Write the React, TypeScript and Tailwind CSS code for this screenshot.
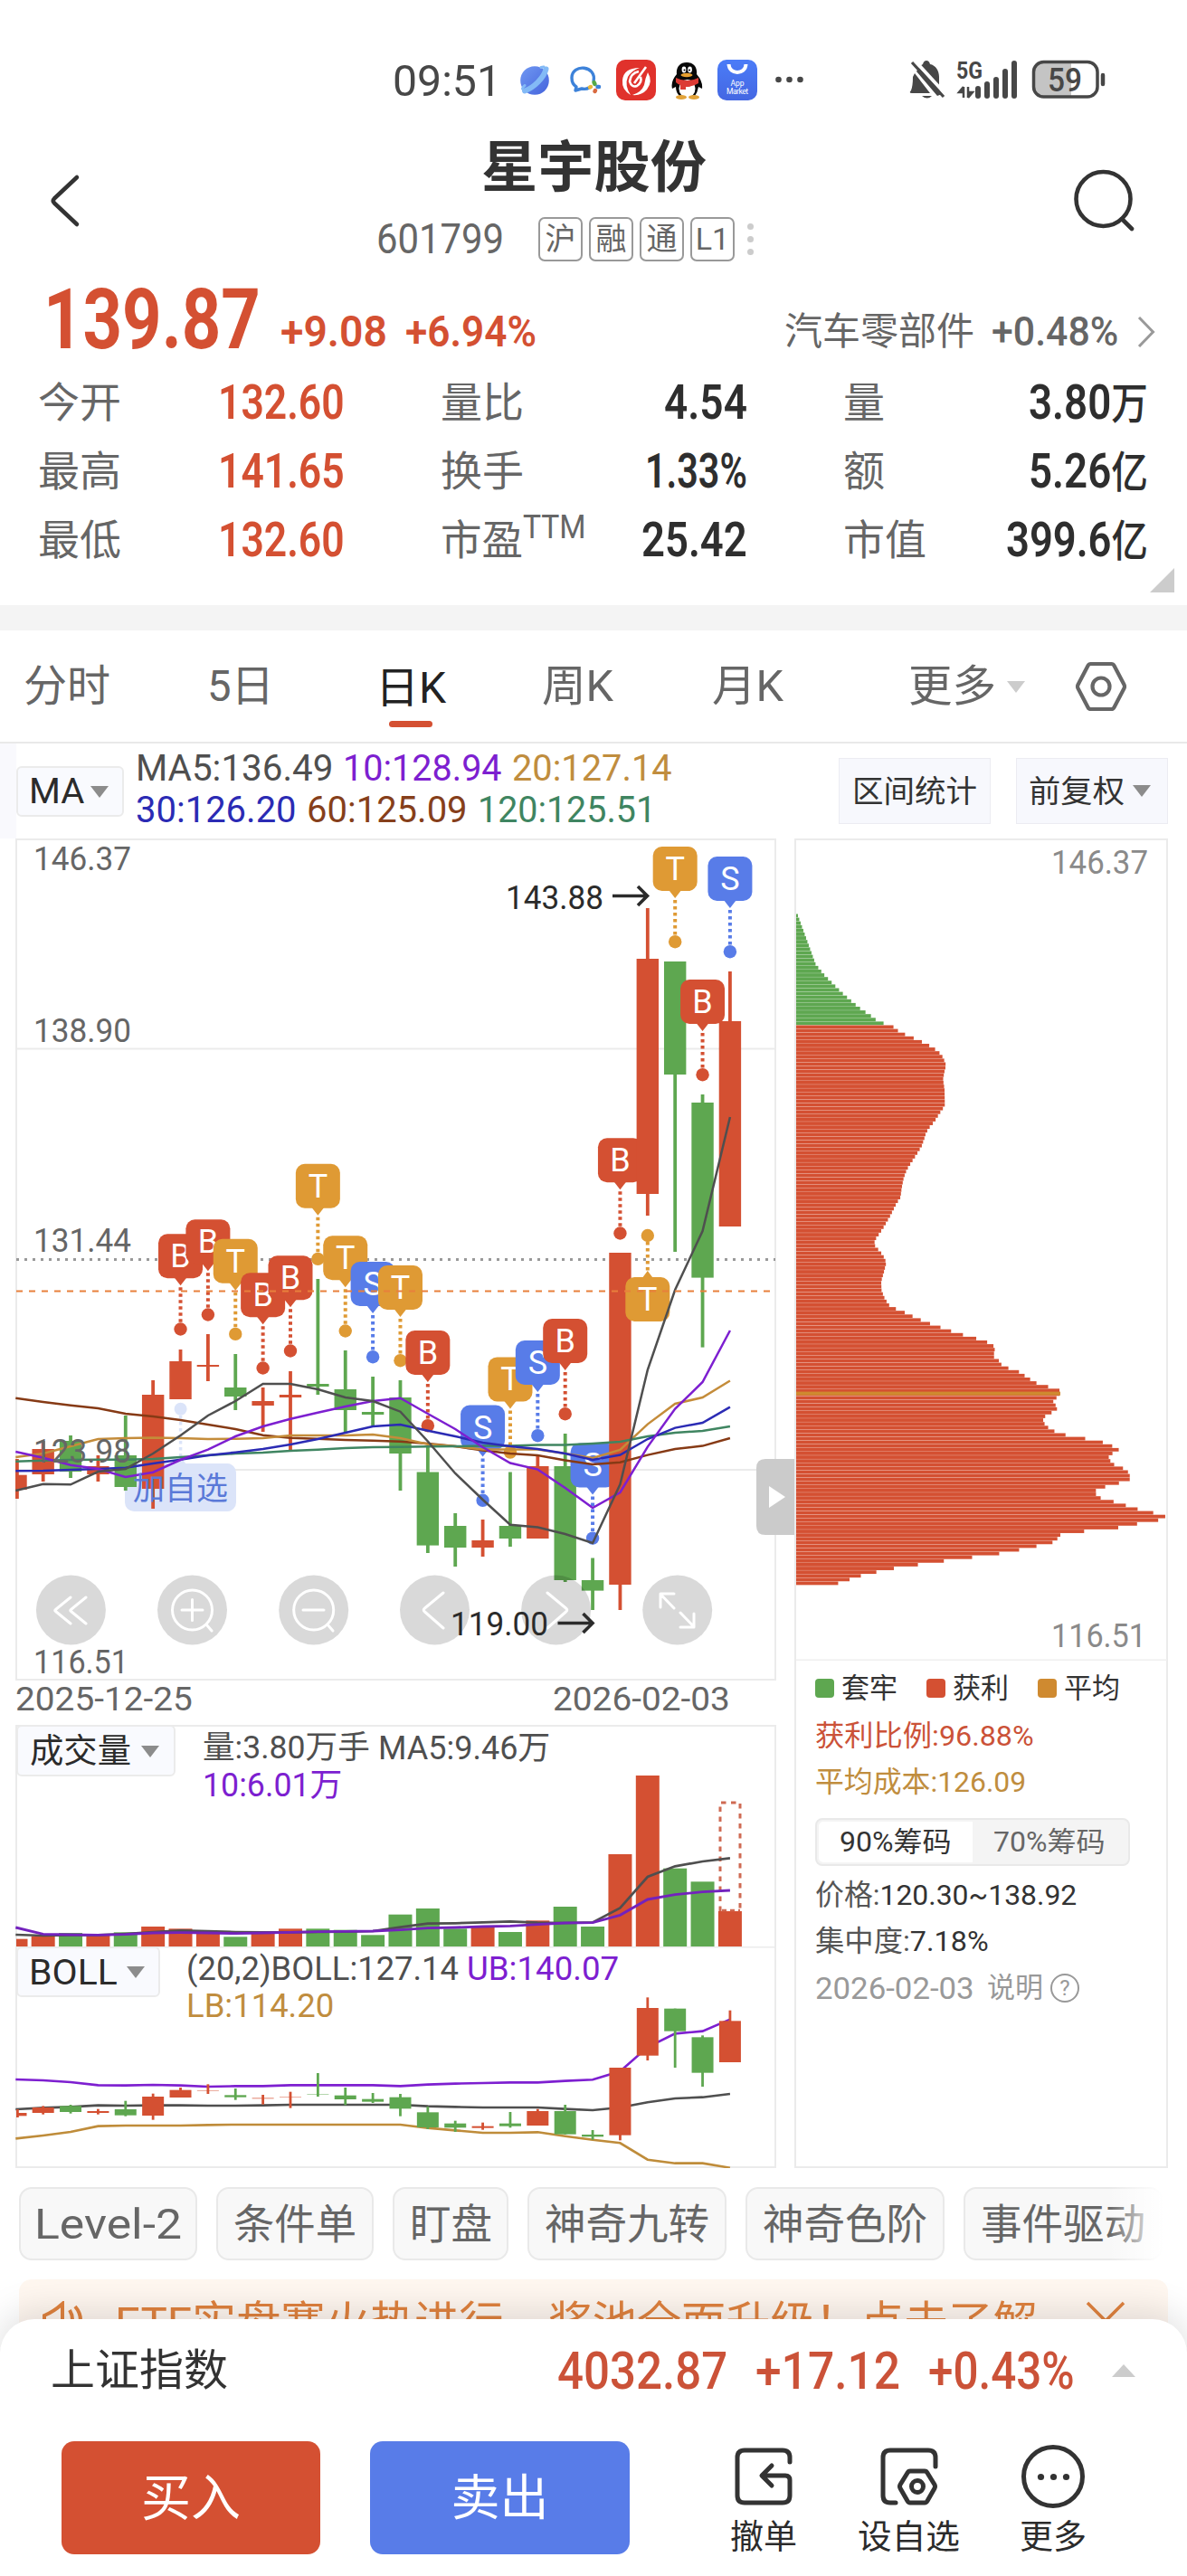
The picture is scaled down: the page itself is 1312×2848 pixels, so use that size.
import { useLayoutEffect, useRef, useState, type ReactNode } from "react";

const RED = "#d45032";
const GREEN = "#5ea750";
const ORANGE = "#df9a34";
const BLUE = "#587ce8";

/* Text squeezed or stretched horizontally to an exact width. */
function Fit({ w, className = "", children }: { w: number; className?: string; children: ReactNode }) {
  const ref = useRef<HTMLSpanElement>(null);
  const [scale, setScale] = useState(1);
  useLayoutEffect(() => {
    if (ref.current) setScale(w / ref.current.offsetWidth);
  }, [w]);
  return (
    <span className="inline-flex shrink-0" style={{ width: w }}>
      <span
        ref={ref}
        className={`inline-block shrink-0 origin-left whitespace-nowrap leading-none ${className}`}
        style={{ transform: `scaleX(${scale})` }}
      >
        {children}
      </span>
    </span>
  );
}

/* ---------- chart data ---------- */

const X0 = 17.3;
const STEP = 30.37;
const px = (i: number) => X0 + STEP * i;

// [up, bodyTop, bodyBottom, wickTop, wickBottom]
type Candle = [boolean, number, number, number, number];
const candles: Candle[] = [
  [true, 1630.7, 1647, 1613, 1657],
  [true, 1602, 1630, 1593, 1638],
  [false, 1593, 1627, 1587, 1634],
  [true, 1621, 1630, 1609, 1638],
  [false, 1609, 1644, 1565, 1648],
  [true, 1542, 1646, 1526, 1668],
  [true, 1505, 1547, 1492, 1547],
  [true, 1509, 1511, 1475, 1527],
  [false, 1534, 1544, 1497, 1559],
  [true, 1549, 1554, 1534, 1583],
  [true, 1542, 1545, 1516, 1604],
  [false, 1530, 1533, 1414, 1542],
  [false, 1536, 1559, 1493, 1585],
  [false, 1561, 1564, 1522, 1576],
  [false, 1545, 1607, 1526, 1648],
  [false, 1627.5, 1708.6, 1598, 1717],
  [false, 1687, 1711, 1673, 1732],
  [true, 1703, 1711, 1680, 1721],
  [false, 1687, 1701, 1627.5, 1710],
  [true, 1621, 1701, 1609, 1701],
  [false, 1621, 1747, 1585, 1749],
  [false, 1747, 1758.6, 1722.5, 1780],
  [true, 1385, 1752, 1385, 1780],
  [true, 1060, 1320, 1004, 1344],
  [false, 1063, 1188, 1063, 1384],
  [false, 1219, 1412.6, 1210, 1489.6],
  [true, 1129, 1356, 1074, 1356],
];

const markers: Record<number, { t: "B" | "S" | "T"; y: number; up?: boolean }> = {
  6: { t: "B", y: 1364.3 },
  7: { t: "B", y: 1348.3 },
  8: { t: "T", y: 1369.7 },
  9: { t: "B", y: 1407.3 },
  10: { t: "B", y: 1388.3 },
  11: { t: "T", y: 1286.7 },
  12: { t: "T", y: 1366.3 },
  13: { t: "S", y: 1395 },
  14: { t: "T", y: 1399 },
  15: { t: "B", y: 1471 },
  17: { t: "S", y: 1553.6 },
  18: { t: "T", y: 1500.4 },
  19: { t: "S", y: 1482 },
  20: { t: "B", y: 1458 },
  21: { t: "S", y: 1595.4 },
  22: { t: "B", y: 1258.3 },
  23: { t: "T", y: 1412, up: true },
  24: { t: "T", y: 936 },
  25: { t: "B", y: 1083 },
  26: { t: "S", y: 947 },
};

const maLines: { c: string; v: number[] }[] = [
  { c: "#863a15", v: [1545.7, 1550, 1553.7, 1557, 1563, 1566, 1570, 1575, 1580, 1586.7, 1589.7, 1590.7, 1592, 1592.7, 1593.7, 1596, 1599, 1603.6, 1607, 1609, 1614.6, 1619, 1616.8, 1608.6, 1602, 1598.6, 1590] },
  { c: "#c48c3a", v: [1611, 1607, 1599, 1591, 1590, 1589.5, 1590, 1591, 1590.7, 1590, 1587, 1587, 1587, 1586, 1590, 1596.7, 1599, 1602.5, 1602.5, 1602.5, 1607, 1612, 1603, 1574.6, 1552, 1545, 1526.5] },
  { c: "#3f8561", v: [1615.7, 1614.7, 1614, 1613.7, 1613.7, 1613, 1611, 1609, 1607, 1606, 1604, 1602.7, 1601, 1600, 1599.7, 1599.3, 1599, 1598.6, 1598.6, 1597.5, 1597.5, 1596, 1594, 1588, 1584, 1582, 1577] },
  { c: "#2b2bb4", v: [1626.3, 1626, 1625, 1624, 1622.7, 1618, 1613.7, 1609, 1605.7, 1602, 1597, 1591, 1584, 1577, 1575, 1581.7, 1588, 1595, 1599, 1602, 1607, 1614, 1608.6, 1591, 1578.6, 1573, 1555.7] },
  { c: "#7d1fd0", v: [1605, 1611.7, 1619.7, 1624, 1633, 1627.7, 1614, 1602.7, 1588, 1577, 1568.7, 1561.7, 1555, 1549, 1545.7, 1563, 1580, 1600, 1617.5, 1624.6, 1645, 1667, 1650, 1599.6, 1557.5, 1528, 1471] },
  { c: "#4f4f4f", v: [1648, 1640.7, 1641.3, 1627, 1624, 1607, 1587, 1565, 1549, 1530, 1530, 1536, 1545, 1549, 1560.7, 1593.5, 1629, 1658, 1685.7, 1688.6, 1696, 1706, 1641, 1514.6, 1426, 1361, 1235] },
];

const volume: [boolean, number][] = [
  [true, 731], [true, 723], [false, 711], [true, 720], [false, 709], [true, 690], [true, 697], [true, 712], [false, 724],
  [true, 709], [true, 697], [false, 697], [false, 701], [false, 718], [false, 650], [false, 630], [false, 697], [true, 690],
  [false, 708], [true, 670], [false, 624], [false, 690], [true, 450], [true, 189], [false, 497], [false, 541], [true, 639],
];
const volMa5 = [717, 720, 718, 718, 714, 708, 703, 705, 708, 709, 709, 708, 707, 705, 692, 680, 679, 676, 673, 677, 678, 676, 628, 525, 490, 474, 463];
const volMa10 = [693, 715, 717, 718, 716, 711, 710, 711, 713, 711, 709, 707, 706, 705, 701, 695, 693, 690, 688, 683, 678, 677, 652, 600, 584, 575, 570];

const bollCandles: Candle[] = [
  [true, 1308, 1318, 1296, 1323], [true, 1290, 1308, 1285, 1313], [false, 1285, 1305, 1281, 1310], [true, 1302, 1308, 1295, 1313],
  [false, 1296, 1316, 1268, 1319], [true, 1254, 1317, 1244, 1331], [true, 1232, 1257, 1224, 1257], [true, 1233, 1235, 1213, 1245],
  [false, 1249, 1256, 1227, 1265], [true, 1258, 1261, 1248, 1280], [true, 1254, 1256, 1238, 1292], [false, 1246, 1248, 1176, 1254],
  [false, 1250, 1263, 1224, 1282], [false, 1262, 1271, 1242, 1275], [false, 1256, 1294, 1245, 1319], [false, 1306, 1356, 1287, 1362],
  [false, 1343, 1357, 1334, 1371], [true, 1352, 1358, 1340, 1364], [false, 1343, 1352, 1305, 1357], [true, 1302, 1350, 1295, 1350],
  [false, 1302, 1379, 1281, 1379], [false, 1380, 1387, 1365, 1397], [true, 1158, 1382, 1158, 1399], [true, 960, 1118, 925, 1134],
  [false, 962, 1037, 962, 1158], [false, 1057, 1175, 1051, 1221], [true, 1003, 1140, 968, 1140],
];
const bollUp = [1197, 1200, 1206, 1216, 1217, 1215, 1217, 1221, 1219, 1219, 1216, 1216, 1216, 1216, 1219, 1214, 1211, 1209, 1207, 1207, 1202, 1198, 1170, 1090, 1045, 1037, 998];
const bollMid = [1296, 1291, 1288, 1283, 1284, 1283, 1283, 1284, 1284, 1283, 1281, 1281, 1281, 1281, 1281, 1286, 1288, 1290, 1290, 1290, 1295, 1299, 1290, 1273, 1260, 1256, 1245];
const bollLow = [1393, 1383, 1371, 1352, 1350, 1350, 1350, 1348, 1347, 1347, 1347, 1347, 1347, 1347, 1347, 1358, 1366, 1374, 1374, 1372, 1385, 1397, 1408, 1463, 1475, 1475, 1490];

// Chip distribution outline: [row, width]
const chips: [number, number][] = [
  [193, 64], [290, 125], [310, 153], [330, 187], [345, 213], [360, 242], [375, 273], [390, 311], [400, 332], [408, 378], [420, 403], [427, 431],
  [434, 459], [441, 485], [448, 508], [456, 528], [463, 540], [470, 548], [484, 557], [498, 551], [512, 547], [530, 552], [560, 553], [568, 546],
  [577, 535], [592, 519], [605, 500], [615, 490], [625, 485], [640, 476], [655, 460], [670, 443], [685, 427], [700, 417], [720, 410], [738, 406],
  [752, 391], [775, 371], [795, 351], [810, 334], [820, 322], [829, 318], [836, 328], [850, 348], [864, 359], [880, 352], [900, 342], [917, 343],
  [930, 351], [945, 366], [951, 382], [958, 412], [966, 441], [973, 467], [980, 496], [987, 530], [994, 564], [1001, 600], [1008, 645], [1015, 684],
  [1022, 712], [1030, 719], [1045, 714], [1052, 731], [1060, 740], [1067, 762], [1073, 795], [1081, 816], [1088, 834], [1095, 852], [1102, 890],
  [1110, 933], [1116, 936], [1124, 924], [1131, 912], [1145, 927], [1152, 910], [1160, 886], [1167, 879], [1174, 883], [1181, 894], [1188, 913],
  [1195, 945], [1202, 1010], [1210, 1076], [1217, 1107], [1224, 1131], [1231, 1110], [1238, 1096], [1246, 1102], [1252, 1110], [1259, 1141],
  [1267, 1160], [1274, 1166], [1281, 1169], [1288, 1135], [1296, 1084], [1303, 1054], [1310, 1054], [1317, 1068], [1324, 1110], [1331, 1150],
  [1338, 1187], [1346, 1245], [1352, 1287], [1360, 1262], [1367, 1193], [1375, 1123], [1382, 1008], [1389, 933], [1396, 926], [1403, 910],
  [1410, 858], [1417, 802], [1425, 728], [1432, 638], [1439, 546], [1446, 462], [1453, 384], [1460, 327], [1467, 276], [1475, 234], [1482, 197], [1489, 197],
];
function chipWidth(r: number) {
  for (let k = 1; k < chips.length; k++) {
    if (r <= chips[k][0]) {
      const [r0, w0] = chips[k - 1];
      const [r1, w1] = chips[k];
      return (w0 + ((w1 - w0) * (r - r0)) / (r1 - r0) - 60) / 3;
    }
  }
  return 0;
}

const line = (v: number[], f: (y: number) => number = (y) => y) => v.map((y, i) => `${px(i)},${f(y)}`).join(" ");
const sub = (y: number) => 1900 + y / 3;

/* ---------- chart pieces ---------- */

function Marker({ x, t, y, up }: { x: number; t: string; y: number; up?: boolean }) {
  const c = t === "B" ? RED : t === "S" ? BLUE : ORANGE;
  return (
    <g>
      {up ? (
        <>
          <circle cx={x} cy={1366} r={7.2} fill={c} />
          <path d={`M${x} 1373V1405`} stroke={c} strokeWidth={4} strokeDasharray="3.5 3.5" />
          <path d={`M${x - 6} ${y + 1}L${x} ${y - 7}L${x + 6} ${y + 1}Z`} fill={c} />
        </>
      ) : (
        <>
          <circle cx={x} cy={y + 105.2} r={7.2} fill={c} />
          <path d={`M${x} ${y + 59}V${y + 99}`} stroke={c} strokeWidth={4} strokeDasharray="3.5 3.5" />
          <path d={`M${x - 7} ${y + 48}L${x} ${y + 57}L${x + 7} ${y + 48}Z`} fill={c} />
        </>
      )}
      <rect x={x - 24.5} y={y} width={49} height={49} rx={10} fill={c} />
      <text x={x} y={y + 37} textAnchor="middle" fill="#fff" fontSize={36}>
        {t}
      </text>
    </g>
  );
}

function AxisText({ x, y, w, children, fill = "#666" }: { x: number; y: number; w: number; children: string; fill?: string }) {
  return (
    <text x={x} y={y} fontSize={36} textLength={w} lengthAdjust="spacingAndGlyphs" fill={fill}>
      {children}
    </text>
  );
}

function Arrow({ x, y }: { x: number; y: number }) {
  return <path d={`M${x} ${y}H${x + 38}M${x + 28} ${y - 10.5}L${x + 38.5} ${y}L${x + 28} ${y + 10.5}`} fill="none" stroke="#2b2b2b" strokeWidth={3.6} />;
}

function MainChart() {
  return (
    <svg viewBox="17 927 841 931" className="block h-[931px] w-[841px]">
      <g stroke="#ebebeb" strokeWidth={2} fill="none">
        <rect x={18} y={928} width={839} height={929} />
        <path d="M18 1159.5H857M18 1625H857" />
      </g>
      <path d="M18 1392.5H857" stroke="#999" strokeWidth={3} strokeDasharray="3 6" />
      <circle cx={199.6} cy={1557.7} r={7} fill="#dbe4f9" />
      <path d="M199.6 1565V1612" stroke="#dbe4f9" strokeWidth={3.5} strokeDasharray="3.5 3.5" />
      <path d="M193 1619L199.6 1611L206 1619Z" fill="#dbe4f9" />
      <rect x={138} y={1618} width={123} height={53} rx={10} fill="#dbe4f9" />
      {candles.map(([up, bt, bb, wt, wb], i) => {
        const c = up ? RED : GREEN;
        const m = markers[i];
        const x = px(i);
        return (
          <g key={i}>
            <rect x={Math.max(x - 1.9, 17)} y={wt} width={3.8} height={wb - wt} fill={c} />
            <rect x={Math.max(x - 12.2, 18)} y={bt} width={i ? 24.4 : 11.7} height={bb - bt} fill={c} />
            {m && <Marker x={x} t={m.t} y={m.y} up={m.up} />}
          </g>
        );
      })}
      {maLines.map((l) => (
        <polyline key={l.c} points={line(l.v)} fill="none" stroke={l.c} strokeWidth={2.5} />
      ))}
      <path d="M18 1427.4H851" stroke="#e8803c" strokeWidth={2} strokeDasharray="7 7" />
      <g fill="#000" fillOpacity={0.15}>
        {[78.4, 212.5, 346.7, 480.5, 614.6, 748.7].map((x) => (
          <circle key={x} cx={x} cy={1780} r={38.5} />
        ))}
      </g>
      <g fill="none" stroke="#fff" strokeWidth={3} strokeLinecap="round" strokeLinejoin="round">
        <path d="M78 1766L61.5 1779.5Q60 1780.5 61.5 1781.5L78 1795M95 1766L78.5 1779.5Q77 1780.5 78.5 1781.5L95 1795" />
        <circle cx={212.5} cy={1780} r={22} />
        <path d="M201 1780H224M212.500 1768.500V1791.500M228 1796L234 1803" />
        <circle cx={346.7} cy={1780} r={22} />
        <path d="M335 1780H358M362 1796L368 1803" />
        <path d="M490 1761L469.500 1778Q467 1780 469.500 1782L490 1800" />
        <path d="M605 1761L625.500 1778Q628 1780 625.500 1782L605 1800" />
        <path d="M745 1778L730.500 1763M730 1777V1762H745M752 1783L766.500 1798M767 1784V1799H752" />
      </g>
      <AxisText x={37} y={962} w={108}>146.37</AxisText>
      <AxisText x={37} y={1152} w={108}>138.90</AxisText>
      <AxisText x={37} y={1384} w={108}>131.44</AxisText>
      <AxisText x={37} y={1616.5} w={108}>123.98</AxisText>
      <AxisText x={37} y={1850} w={105}>116.51</AxisText>
      <AxisText x={559} y={1004.5} w={108} fill="#2b2b2b">143.88</AxisText>
      <Arrow x={677} y={990.5} />
      <AxisText x={498} y={1807.5} w={108} fill="#2b2b2b">119.00</AxisText>
      <Arrow x={616.5} y={1794.5} />
      <text x={147} y={1658} fontSize={35} textLength={105} fill="#5a79d8">
        加自选
      </text>
      <path d="M858 1613H846Q836 1613 836 1623V1687Q836 1697 846 1697H858Z" fill="#cbcbcb" />
    </svg>
  );
}

function VolumeChart() {
  return (
    <svg viewBox="17 1907 841 245" className="absolute inset-0 h-[245px] w-[841px]">
      <path d="M18 2152V1908H857V2152" fill="none" stroke="#ebebeb" strokeWidth={2} />
      {volume.map(([up, y], i) => (
        <rect key={i} x={i ? px(i) - 13 : 18} y={sub(y)} width={i ? 26 : 12.5} height={2152 - sub(y)} fill={up ? RED : GREEN} />
      ))}
      <path d="M796 2113V1993H818V2113" fill="none" stroke="#cf6a53" strokeWidth={3} strokeDasharray="5.5 5.500" />
      <path d="M798 2112H818" stroke="#cf6a53" strokeWidth={2.4} strokeDasharray="5 4" />
      <polyline points={line(volMa5, sub)} fill="none" stroke="#4f4f4f" strokeWidth={2.7} />
      <polyline points={line(volMa10, sub)} fill="none" stroke="#7322bd" strokeWidth={2.9} />
    </svg>
  );
}

function BollChart() {
  return (
    <svg viewBox="17 2152 841 245" className="absolute inset-0 h-[245px] w-[841px]">
      <rect x={18} y={2152.5} width={839} height={243.5} fill="none" stroke="#ebebeb" strokeWidth={2} />
      <polyline points={line(bollUp, sub)} fill="none" stroke="#7d1fd0" strokeWidth={2.6} />
      <polyline points={line(bollMid, sub)} fill="none" stroke="#4f4f4f" strokeWidth={2.6} />
      <polyline points={line(bollLow, sub)} fill="none" stroke="#bf8c3a" strokeWidth={2.6} />
      {bollCandles.map(([up, bt, bb, wt, wb], i) => (
        <g key={i} fill={up ? RED : GREEN}>
          <rect x={Math.max(px(i) - 1.4, 18)} y={sub(wt)} width={2.8} height={(wb - wt) / 3} />
          <rect x={i ? px(i) - 12 : 18} y={sub(bt)} width={i ? 24 : 11.5} height={(bb - bt) / 3} fillOpacity={bb - bt < 4 ? 0.7 : 1} />
        </g>
      ))}
    </svg>
  );
}

function ChipChart() {
  const pitch = 4.1;
  const rows = Array.from({ length: 181 }, (_, k) => k);
  return (
    <svg viewBox="878 927 413 909" className="block h-[909px] w-[413px]">
      {rows.map((k) => {
        const y = 1010.5 + k * pitch;
        const r = (y + 2 - 900) * 1.742;
        return <rect key={k} x={880} y={y} width={Math.max(chipWidth(r), 0)} height={pitch - 0.25} fill={y < 1130 ? GREEN : RED} />;
      })}
      <rect x={880} y={1538.6} width={292} height={4} fill="#cf8a30" />
      <path d="M879 927V1836M1290 927V1836" stroke="#ebebeb" strokeWidth={2} />
      <path d="M878 928H1291" stroke="#ebebeb" strokeWidth={2} />
      <AxisText x={1162} y={966} w={107} fill="#8a8a8a">146.37</AxisText>
      <AxisText x={1162} y={1821} w={105} fill="#8a8a8a">116.51</AxisText>
      <path d="M880 1835.5H1290" stroke="#efefef" strokeWidth={2} />
    </svg>
  );
}

/* ---------- small pieces ---------- */

function Tri({ className = "h-[13px] w-5" }: { className?: string }) {
  return (
    <svg viewBox="0 0 20 13" preserveAspectRatio="none" className={`shrink-0 fill-current ${className}`}>
      <path d="M0 0H20L10 13Z" />
    </svg>
  );
}

function StatusBar() {
  return (
    <div className="flex h-[130px] items-center pt-12 pl-[434px] text-[#474747]">
      <Fit w={120} className="text-[49px]">09:51</Fit>
      <svg viewBox="554 60 340 60" className="h-[60px] w-[340px]">
        <defs>
          <linearGradient id="planet" x1="0" y1="0" x2="1" y2="1">
            <stop offset="0" stopColor="#7099f2" />
            <stop offset="1" stopColor="#4463dc" />
          </linearGradient>
          <linearGradient id="market" x1="0" y1="0" x2="0" y2="1">
            <stop offset="0" stopColor="#4b7cf8" />
            <stop offset="1" stopColor="#4467e2" />
          </linearGradient>
        </defs>
        <circle cx={591} cy={90} r={15.8} fill="url(#planet)" />
        <path d="M580 101.500C590 98 601 87 603.500 77.500" fill="none" stroke="#83baf6" strokeWidth={6} strokeLinecap="round" />
        <path d="M577.500 99Q578 97 580 95.500M598 75.500L601 75" fill="none" stroke="#83baf6" strokeWidth={3} strokeLinecap="round" />
        <path d="M656 91C660 73 632 71 632 87Q632 94 637 97L636 101L643 99Q648 100 651 98" fill="none" stroke="#3d82d9" strokeWidth={3.4} strokeLinejoin="round" />
        <path d="M656.500 92L657.500 94" stroke="#55a947" strokeWidth={4.500} strokeLinecap="round" />
        <path d="M660.500 97H662" stroke="#3d82d9" strokeWidth={4.500} strokeLinecap="round" />
        <path d="M658 101L657.500 102" stroke="#d96a40" strokeWidth={4.500} strokeLinecap="round" />
        <path d="M652 97.500L653 97" stroke="#e9b63c" strokeWidth={4.500} strokeLinecap="round" />
        <rect x={681} y={67} width={44} height={45} rx={10} fill="#e0322c" />
        <path d="M707 76Q689 76 688 90Q687 100 697 106Q690 95 694 86Q698 79 707 76ZM716 81Q722 91 715 100Q709 107 699 106Q709 103 712 95Q713 88 716 81Z" fill="#fff" />
        <path d="M714 75L701 93M706 80Q697 82 696 91Q698 98 704 96Q710 92 708 86" fill="none" stroke="#fff" strokeWidth={2.6} />
        <path d="M759 70C751 70 747 76 748 83Q741 91 743 99L747 97Q747 103 751 107H768Q771 103 772 97L776 99Q777 91 770 83C771 76 767 70 759 70Z" fill="#080808" />
        <ellipse cx={759.500} cy={99} rx={9} ry={10} fill="#fff" />
        <ellipse cx={753} cy={108.500} rx={6} ry={2.4} fill="#e2a33a" />
        <ellipse cx={767} cy={108.500} rx={6} ry={2.4} fill="#e2a33a" />
        <path d="M747 87Q759 93 772 87L772 93Q766 97 758 97V100H752V95Q749 94 747 92Z" fill="#dc3a34" />
        <ellipse cx={759} cy={84} rx={6.500} ry={2.200} fill="#e8a030" />
        <ellipse cx={756} cy={78} rx={2.400} ry={3.400} fill="#fff" />
        <ellipse cx={762.500} cy={78} rx={2.400} ry={3.400} fill="#fff" />
        <circle cx={756.500} cy={78.500} r={1} />
        <circle cx={762} cy={78.500} r={1} />
        <rect x={793} y={67} width={44} height={45} rx={10} fill="url(#market)" />
        <path d="M805.500 72C806 84 824 84 824.500 72" fill="none" stroke="#fff" strokeWidth={4} />
        <text x={815} y={96} fontSize={8.500} fill="#fff" textAnchor="middle">App</text>
        <text x={815} y={105} fontSize={8.500} fill="#fff" textAnchor="middle" textLength={24}>Market</text>
        <circle cx={860.500} cy={89} r={3.300} fill="#474747" />
        <circle cx={872.500} cy={89} r={3.300} fill="#474747" />
        <circle cx={884.500} cy={89} r={3.300} fill="#474747" />
      </svg>
      <svg viewBox="1000 60 230 60" className="ml-[106px] h-[60px] w-[230px]" fill="#474747">
        <path d="M1013 80L1036 107L1041 105 1038 99Q1038 93 1038 86C1038 79 1034 73 1028 72Q1027 68 1024 68Q1021 68 1020 72Q1016 74 1013 80ZM1009 86Q1009 96 1007 101Q1004 104 1008 104H1028L1011 82ZM1019 107H1030Q1025 112 1019 107Z" />
        <path d="M1010 67L1045 105" stroke="#fff" strokeWidth={4} />
        <path d="M1008 70L1043 108" stroke="#474747" strokeWidth={3.200} />
        <text x={1057} y={88} fontSize={26} fontWeight={700} textLength={29} lengthAdjust="spacingAndGlyphs">5G</text>
        <path d="M1065 97V109M1065 97L1060 103H1065M1070 97V109M1070 109L1075 103H1070" stroke="#474747" strokeWidth={2.500} />
        <path d="M1081 99V107M1091 94V107M1101 89V107M1111 80V107M1121 71V107" stroke="#474747" strokeWidth={6} strokeLinecap="round" />
        <path d="M1184 71H1153Q1143 71 1143 81V97Q1143 107 1153 107H1184Z" fill="#c4c4c4" />
        <rect x={1142.500} y={69.500} width={70.500} height={38.500} rx={11} fill="none" stroke="#474747" strokeWidth={3.500} />
        <path d="M1219 84V94" stroke="#474747" strokeWidth={4.500} strokeLinecap="round" />
        <text x={1158} y={102} fontSize={36} fontWeight={500} textLength={38} lengthAdjust="spacingAndGlyphs">59</text>
      </svg>
    </div>
  );
}

function Header() {
  return (
    <div className="flex h-[174px] pt-[14px]">
      <svg viewBox="40 190 60 64" className="mt-[46px] ml-10 h-16 w-[60px]" fill="none" stroke="#333" strokeWidth={4.500} strokeLinecap="round" strokeLinejoin="round">
        <path d="M85 196L60 219.500Q57.500 222 60 224.500L85 248" />
      </svg>
      <div className="ml-[316px] flex flex-col">
        <div className="flex h-20 items-center pt-[3px] pl-[116px]">
          <Fit w={249} className="text-[62px] font-bold text-[#333]">星宇股份</Fit>
        </div>
        <div className="flex h-20 items-center text-[#666]">
          <Fit w={141} className="text-[46px]">601799</Fit>
          <div className="ml-[38px] flex gap-[7px]">
            {["沪", "融", "通", "L1"].map((t) => (
              <span key={t} className="flex size-[49px] items-center justify-center rounded-[7px] border-2 border-[#999] text-[34px] leading-none">
                {t}
              </span>
            ))}
          </div>
          <div className="ml-[14px] flex flex-col gap-[7px]">
            {[0, 1, 2].map((k) => (
              <span key={k} className="size-[7px] rounded-full bg-[#ccc]" />
            ))}
          </div>
        </div>
      </div>
      <svg viewBox="1180 180 80 80" className="mt-9 mr-[52px] ml-auto size-20" fill="none" stroke="#333" strokeWidth={4.600} strokeLinecap="round">
        <circle cx={1219.500} cy={220} r={30} />
        <path d="M1240 242L1251 253" />
      </svg>
    </div>
  );
}

const quotes: { l: string; lw: number; v: string; vw: number; red?: boolean; sup?: string }[] = [
  { l: "今开", lw: 92, v: "132.60", vw: 140, red: true },
  { l: "量比", lw: 92, v: "4.54", vw: 92 },
  { l: "量", lw: 46, v: "3.80万", vw: 132 },
  { l: "最高", lw: 92, v: "141.65", vw: 140, red: true },
  { l: "换手", lw: 92, v: "1.33%", vw: 113 },
  { l: "额", lw: 46, v: "5.26亿", vw: 132 },
  { l: "最低", lw: 92, v: "132.60", vw: 140, red: true },
  { l: "市盈", lw: 91, v: "25.42", vw: 117, sup: "TTM" },
  { l: "市值", lw: 92, v: "399.6亿", vw: 157 },
];

function Quotes() {
  return (
    <>
      <div className="flex h-[103px] items-center pb-1 pl-[48px] font-medium text-[#d45032]">
        <Fit w={240} className="text-[93px] font-bold">139.87</Fit>
        <div className="ml-[22px] flex flex-1 items-center pt-[26px]">
          <Fit w={118} className="text-[49px] font-semibold">+9.08</Fit>
          <span className="ml-[20px] flex">
            <Fit w={145} className="text-[49px] font-semibold">+6.94%</Fit>
          </span>
          <span className="ml-[274px] flex font-normal text-[#666]">
            <Fit w={210} className="text-[42px]">汽车零部件</Fit>
          </span>
          <span className="ml-[19px] flex text-[#666]">
            <Fit w={140} className="text-[45px]">+0.48%</Fit>
          </span>
          <svg viewBox="0 0 20 34" className="ml-[21px] h-[34px] w-5" fill="none" stroke="#999" strokeWidth={3}>
            <path d="M2 1L17.500 17L2 33" />
          </svg>
        </div>
      </div>
      <div className="grid grid-cols-[339px_339px_337px] gap-x-[106px] pl-[42px]">
        {quotes.map((q, i) => (
          <div key={i} className="flex h-[76px] items-center justify-between">
            <span className="flex text-[#666]">
              <Fit w={q.lw} className="text-[46px]">{q.l}</Fit>
              {q.sup && (
                <span className="-mt-[9px]">
                  <Fit w={70} className="text-[36px]">{q.sup}</Fit>
                </span>
              )}
            </span>
            <span className={q.red ? "flex text-[#d45032]" : "flex text-[#2e2e2e]"}>
              <Fit w={q.vw} className="text-[54px] font-semibold">
                {q.v.slice(0, -1)}
                {/[万亿]/.test(q.v) ? <span className="text-[48px] font-medium">{q.v.slice(-1)}</span> : q.v.slice(-1)}
              </Fit>
            </span>
          </div>
        ))}
      </div>
      <div className="flex h-[34px] items-start justify-end pr-[14px]">
        <svg viewBox="0 0 27 27" className="-mt-[7px] size-[27px]" fill="#ccc">
          <path d="M27 0V27H0Z" />
        </svg>
      </div>
    </>
  );
}

function Tabs() {
  return (
    <div className="flex h-[125px] items-center border-b-2 border-[#e9e9e9] pt-px pl-[26px] text-[48px] text-[#666]">
      <Fit w={96}>分时</Fit>
      <span className="ml-[107px] flex"><Fit w={74}>5日</Fit></span>
      <div className="ml-[112px] flex h-full flex-col items-center pt-[39px] text-[#222]">
        <Fit w={78}>日K</Fit>
        <span className="mt-[12px] h-[7px] w-12 rounded-full bg-[#d45032]" />
      </div>
      <span className="ml-[106px] flex"><Fit w={79}>周K</Fit></span>
      <span className="ml-[109px] flex"><Fit w={79}>月K</Fit></span>
      <span className="ml-[138px] flex"><Fit w={97}>更多</Fit></span>
      <Tri className="ml-[12px] h-[13px] w-5 text-[#ccc]" />
      <svg viewBox="0 0 58 56" className="ml-[55px] h-14 w-[58px]" fill="none" stroke="#666" strokeWidth={4.200} strokeLinejoin="round">
        <path d="M17.500 3H40.500Q42.500 3 43.500 5L54.500 26Q55.500 28 54.500 30L43.500 51Q42.500 53 40.500 53H17.500Q15.500 53 14.500 51L3.500 30Q2.500 28 3.500 26L14.500 5Q15.500 3 17.500 3Z" />
        <circle cx={29} cy={28} r={9.500} />
      </svg>
    </div>
  );
}

function MaBar() {
  return (
    <div className="flex h-[105px]">
      <div className="w-[18px] bg-[#f9f9fd]" />
      <div className="mt-[25px] flex h-[56px] w-[119px] items-center rounded-[6px] border-2 border-[#ebebeb] bg-[#f9fafe] pl-[12px] text-[#2b2b2b]">
        <Fit w={61} className="text-[38px]">MA</Fit>
        <Tri className="ml-[7px] h-[13px] w-5 text-[#8c8c8c]" />
      </div>
      <div className="mt-[5px] ml-[13px] flex w-[701px] flex-col text-[40px]">
        <div className="flex h-[46px] items-center gap-[11px]">
          <Fit w={218} className="text-[#4f4f4f]">MA5:136.49</Fit>
          <Fit w={176} className="text-[#7d1fd0]">10:128.94</Fit>
          <Fit w={177} className="text-[#c08d3e]">20:127.14</Fit>
        </div>
        <div className="flex h-[46px] items-center gap-[11px]">
          <Fit w={178} className="text-[#2b2bb4]">30:126.20</Fit>
          <Fit w={178} className="text-[#863f1b]">60:125.09</Fit>
          <Fit w={197} className="text-[#3f8561]">120:125.51</Fit>
        </div>
      </div>
      <div className="mt-4 ml-[76px] flex h-[73px] gap-[28px] text-[34px] text-[#333]">
        <div className="flex w-[168px] items-center justify-center border border-[#ececf2] bg-[#f7f8fd]">
          <Fit w={138}>区间统计</Fit>
        </div>
        <div className="flex w-[168px] items-center border border-[#ececf2] bg-[#f7f8fd] pl-[13px]">
          <Fit w={106}>前复权</Fit>
          <Tri className="ml-[9px] h-[13px] w-5 text-[#8c8c8c]" />
        </div>
      </div>
    </div>
  );
}

function Charts() {
  return (
    <div className="flex h-[1470px] gap-[20px] pl-[17px]">
      <div className="flex w-[841px] flex-col">
        <MainChart />
        <div className="flex h-[49px] items-center justify-between pr-[51px] pb-[9px] text-[37px] text-[#666]">
          <Fit w={196}>2025-12-25</Fit>
          <Fit w={196}>2026-02-03</Fit>
        </div>
        <div className="relative flex h-[245px]">
          <VolumeChart />
          <div className="relative ml-px flex h-[57px] w-[176px] items-center rounded-[6px] border-2 border-[#ebebeb] bg-[#f9fafe] pt-[2px] pl-[13px] text-[#2b2b2b]">
            <Fit w={112} className="text-[37px]">成交量</Fit>
            <Tri className="ml-[11px] h-[13px] w-5 text-[#8c8c8c]" />
          </div>
          <div className="relative ml-[30px] flex flex-col pt-[5px] text-[37px] text-[#4f4f4f]">
            <div className="flex h-[41px] items-center gap-[9px]">
              <Fit w={185} className="text-[35px]">量:3.80万手</Fit>
              <Fit w={190} className="text-[36px]">MA5:9.46万</Fit>
            </div>
            <div className="flex h-[41px] items-center text-[#7d1fd0]">
              <Fit w={154} className="text-[36px]">10:6.01万</Fit>
            </div>
          </div>
        </div>
        <div className="relative flex h-[245px]">
          <BollChart />
          <div className="relative ml-px flex h-[56px] w-[159px] items-center rounded-[6px] border-2 border-[#ebebeb] bg-[#f9fafe] pt-px pl-[12px] text-[#2b2b2b]">
            <Fit w={98} className="text-[38px]">BOLL</Fit>
            <Tri className="ml-[10px] h-[13px] w-5 text-[#8c8c8c]" />
          </div>
          <div className="relative ml-[29px] flex flex-col pt-[4px] text-[36px]">
            <div className="flex h-[41px] items-center gap-[9px]">
              <Fit w={301} className="text-[#4f4f4f]">(20,2)BOLL:127.14</Fit>
              <Fit w={168} className="text-[#7d1fd0]">UB:140.07</Fit>
            </div>
            <div className="flex h-[41px] items-center text-[#c08d3e]">
              <Fit w={163}>LB:114.20</Fit>
            </div>
          </div>
        </div>
      </div>
      <div className="relative flex w-[413px] flex-col">
        <ChipChart />
        <div className="flex flex-1 flex-col border-x-2 border-b-2 border-[#ebebeb] pl-[21px] text-[31px] text-[#333]">
          <div className="flex h-[57px] items-center pt-[3px]">
            <span className="size-[21px] rounded-[4px] bg-[#5ea750]" />
            <span className="ml-2 flex w-[94px]"><Fit w={62}>套牢</Fit></span>
            <span className="size-[21px] rounded-[4px] bg-[#d45032]" />
            <span className="ml-2 flex w-[94px]"><Fit w={62}>获利</Fit></span>
            <span className="size-[21px] rounded-[4px] bg-[#cf8a30]" />
            <span className="ml-2 flex"><Fit w={62}>平均</Fit></span>
          </div>
          <div className="flex h-[51px] items-center text-[#cb5238]"><Fit w={242} className="text-[32px]">获利比例:96.88%</Fit></div>
          <div className="flex h-[51px] items-center text-[#c08d3e]"><Fit w={233} className="text-[32px]">平均成本:126.09</Fit></div>
          <div className="mt-[15px] flex h-[53px] w-[348px] rounded-[8px] border-2 border-[#e9e9e9] bg-[#f4f4f4] p-[2px]">
            <div className="flex w-[170px] items-center justify-center rounded-l-[5px] bg-white"><Fit w={124}>90%筹码</Fit></div>
            <div className="flex flex-1 items-center justify-center text-[#666]"><Fit w={124}>70%筹码</Fit></div>
          </div>
          <div className="mt-[6px] flex h-[51px] items-center">
            <Fit w={289} className="text-[32px]"><span className="text-[#555]">价格:</span>120.30~138.92</Fit>
          </div>
          <div className="flex h-[51px] items-center">
            <Fit w={192} className="text-[32px]"><span className="text-[#555]">集中度:</span>7.18%</Fit>
          </div>
          <div className="flex h-[53px] items-center text-[#999]">
            <Fit w={176} className="text-[34px]">2026-02-03</Fit>
            <span className="ml-[14px] flex"><Fit w={62}>说明</Fit></span>
            <span className="ml-[8px] flex size-8 items-center justify-center rounded-full border-2 border-[#999] text-[24px] leading-none">?</span>
          </div>
        </div>
      </div>
    </div>
  );
}

function Chips() {
  return (
    <div className="relative mt-[21px] flex h-[81px] gap-[21px] overflow-hidden pl-[21px] text-[#666]">
      {[
        ["Level-2", 197, 163],
        ["条件单", 174, 136],
        ["盯盘", 128, 91],
        ["神奇九转", 220, 182],
        ["神奇色阶", 220, 182],
        ["事件驱动", 220, 182],
      ].map(([t, w, tw]) => (
        <div key={t} className="flex shrink-0 items-center justify-center rounded-[14px] border-2 border-[#e9e9e9] bg-[#f8f8f8] pt-px" style={{ width: w as number }}>
          <Fit w={tw as number} className="text-[46px]">{t}</Fit>
        </div>
      ))}
      <div className="absolute inset-y-0 right-[27px] w-[60px] bg-linear-to-r from-white/0 to-white" />
      <div className="absolute inset-y-0 right-0 w-[27px] bg-white" />
    </div>
  );
}

function Banner() {
  return (
    <div className="mx-[21px] mt-[21px] flex h-[100px] items-start rounded-[14px] bg-[#fff7f0] pt-[24px] pl-[24px] text-[#e0823e]">
      <svg viewBox="0 0 50 44" className="h-11 w-[50px]" fill="none" stroke="#e0823e" strokeWidth={4}>
        <path d="M24 3Q14 12 4 16V32Q14 36 24 42ZM32 10Q38 20 32 32M38 6Q50 20 38 38" />
      </svg>
      <span className="ml-[32px] flex"><Fit w={1020} className="text-[49px]">ETF实盘赛火热进行，奖池全面升级！点击了解</Fit></span>
      <svg viewBox="0 0 44 44" className="ml-[53px] size-11" fill="none" stroke="#e0823e" strokeWidth={3.500}>
        <path d="M2 2L42 42M42 2L2 42" />
      </svg>
    </div>
  );
}

function Sheet() {
  return (
    <div className="relative -mt-14 flex h-[284px] flex-col rounded-t-[38px] bg-white shadow-[0_-8px_40px_rgba(0,0,0,0.13)]">
      <div className="flex h-[114px] items-center pl-[56px] font-medium text-[#cb5238]">
        <span className="flex font-normal text-[#333]"><Fit w={196} className="text-[48px]">上证指数</Fit></span>
        <span className="ml-[364px] flex"><Fit w={188} className="text-[57px]">4032.87</Fit></span>
        <span className="ml-[31px] flex"><Fit w={160} className="text-[57px]">+17.12</Fit></span>
        <span className="ml-[31px] flex"><Fit w={162} className="text-[57px]">+0.43%</Fit></span>
        <Tri className="ml-[41px] h-[14px] w-[26px] rotate-180 text-[#ccc]" />
      </div>
      <div className="flex pt-[21px] pl-[68px] text-white">
        <div className="flex h-[125px] w-[286px] items-center justify-center rounded-[14px] bg-[#d45032] pt-[2px]">
          <Fit w={110} className="text-[55px]">买入</Fit>
        </div>
        <div className="ml-[55px] flex h-[125px] w-[287px] items-center justify-center rounded-[14px] bg-[#587ce8] pt-[2px]">
          <Fit w={108} className="text-[54px]">卖出</Fit>
        </div>
        <div className="ml-[111px] flex flex-col items-center text-[#2b2b2b]">
          <svg viewBox="0 0 74 78" className="h-[78px] w-[74px]" fill="none" stroke="#333" strokeWidth={5} strokeLinecap="round" strokeLinejoin="round">
            <path d="M66 23V18Q66 10 58 10H16Q8 10 8 18V60Q8 68 16 68H58Q66 68 66 60V43Q66 38 61 38H36M46 27L35 38L46 49" />
          </svg>
          <span className="mt-[10px] flex"><Fit w={74} className="text-[37px]">撤单</Fit></span>
        </div>
        <div className="ml-[67px] flex flex-col items-center text-[#2b2b2b]">
          <svg viewBox="0 0 74 78" className="h-[78px] w-[74px]" fill="none" stroke="#333" strokeWidth={5} strokeLinecap="round" strokeLinejoin="round">
            <path d="M66 28V18Q66 10 58 10H16Q8 10 8 18V60Q8 68 16 68H22M38 33H54Q56 33 57 35L65 48Q66 50 65 52L57 66Q56 68 54 68H38Q36 68 35 66L27 52Q26 50 27 48L35 35Q36 33 38 33Z" />
            <circle cx={46} cy={50} r={6.500} />
          </svg>
          <span className="mt-[10px] flex"><Fit w={113} className="text-[37px]">设自选</Fit></span>
        </div>
        <div className="ml-[66px] flex flex-col items-center text-[#2b2b2b]">
          <svg viewBox="0 0 74 78" className="h-[78px] w-[74px]" fill="none" stroke="#333" strokeWidth={5}>
            <circle cx={37} cy={39} r={32.500} />
            <g fill="#333" stroke="none">
              <circle cx={23.500} cy={39.500} r={3.600} />
              <circle cx={37.500} cy={39.500} r={3.600} />
              <circle cx={51.500} cy={39.500} r={3.600} />
            </g>
          </svg>
          <span className="mt-[10px] flex"><Fit w={74} className="text-[37px]">更多</Fit></span>
        </div>
      </div>
    </div>
  );
}

export default function App() {
  return (
    <div className="relative h-[2848px] w-[1312px] overflow-hidden bg-white font-['Roboto','Noto_Sans_CJK_SC',sans-serif]">
      <StatusBar />
      <Header />
      <Quotes />
      <div className="h-7 bg-[#f4f4f4]" />
      <Tabs />
      <MaBar />
      <Charts />
      <Chips />
      <Banner />
      <Sheet />
      <div className="absolute top-[1613px] left-[850px] flex h-[84px] w-[28px] items-center bg-[#cbcbcb]">
        <svg viewBox="0 0 18 24" className="h-6 w-[18px]" fill="#fff">
          <path d="M0 0L18 12L0 24Z" />
        </svg>
      </div>
    </div>
  );
}
